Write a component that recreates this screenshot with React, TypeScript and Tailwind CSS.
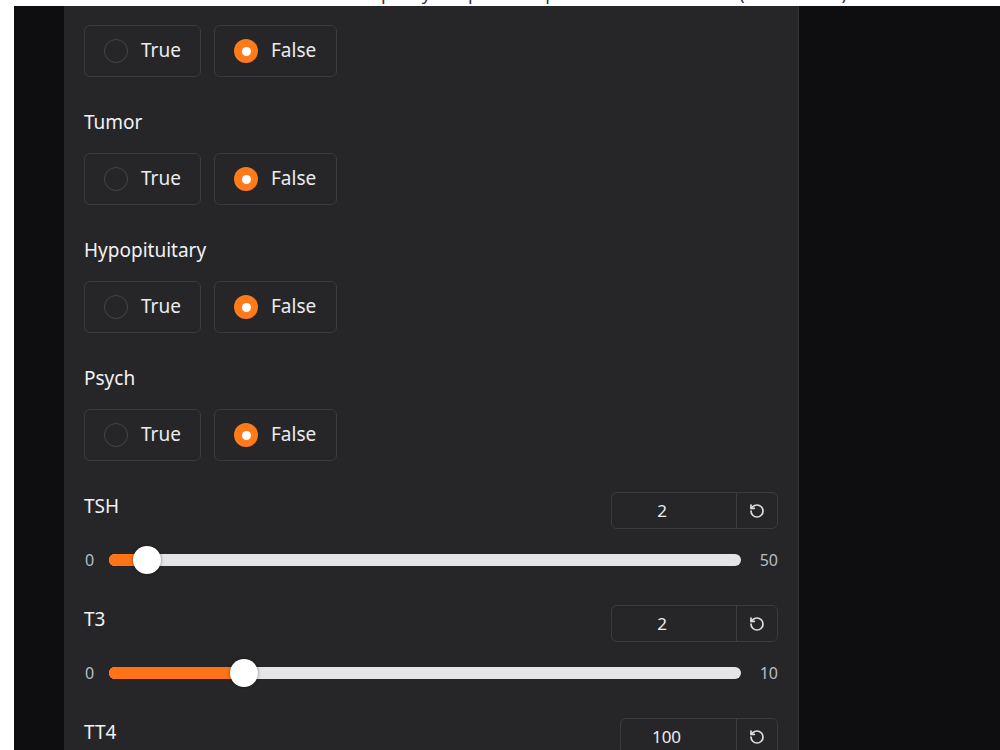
import React from 'react';
import { RotateCcw } from 'lucide-react';

const font = { fontFamily: '"Source Sans Pro", "Noto Sans", "Liberation Sans", sans-serif' };

// boolean choice rendered as two boxed radios
function BoolRadio({ label, value }: { label?: string; value: boolean }) {
  const Opt = ({ text, on, w }: { text: string; on: boolean; w: string }) => (
    <div className={`flex h-[52px] ${w} items-center gap-[13px] rounded-md border border-[#3b3b40] pl-[19px]`}>
      {on ? (
        <span className="flex h-[24px] w-[24px] items-center justify-center rounded-full bg-[#ff7a1a]">
          <span className="h-[9px] w-[9px] rounded-full bg-white" />
        </span>
      ) : (
        <span className="h-[24px] w-[24px] rounded-full border border-[#45454b]" />
      )}
      <span className="-mt-[1px] text-[19px] leading-none text-[#ececef]">{text}</span>
    </div>
  );
  return (
    <div className="flex flex-col">
      {label && <div className="mb-[19px] h-[24px] text-[19px] leading-[24px] text-[#f2f2f4]">{label}</div>}
      <div className="flex gap-[13px]">
        <Opt text="True" on={value} w="w-[117px]" />
        <Opt text="False" on={!value} w="w-[123px]" />
      </div>
    </div>
  );
}

function NumSlider({ label, value, min, max, inputW }: { label: string; value: number; min: number; max: number; inputW: string }) {
  const pct = (value - min) / (max - min);
  return (
    <div className="flex flex-col">
      <div className="flex items-start justify-between">
        <div className="mt-[2px] h-[24px] text-[19px] leading-[24px] text-[#f2f2f4]">{label}</div>
        <div className={`flex h-[37px] ${inputW} rounded-md border border-[#3b3b40]`}>
          <div className="flex flex-1 items-center justify-center pr-[24px] text-[17px] text-[#ececef]">{value}</div>
          <div className="flex w-[41px] items-center justify-center border-l border-[#3b3b40] text-[#dcdce0]">
            <RotateCcw size={16} strokeWidth={2.6} />
          </div>
        </div>
      </div>
      <div className="mt-[17px] flex h-[28px] items-center">
        <span className="w-[25px] pl-[1px] text-[16px] text-[#b9bcc6]">{min}</span>
        <div className="relative h-[12px] flex-1 rounded-full bg-[#e5e5e8]">
          <div
            className="absolute left-0 top-0 h-[12px] rounded-full bg-[#ff7316]"
            style={{ width: `calc(14px + (100% - 28px) * ${pct})` }}
          />
          <div
            className="absolute top-1/2 h-[28px] w-[28px] -translate-y-1/2 rounded-full bg-white shadow-[0_0_3px_rgba(0,0,0,0.5)]"
            style={{ left: `calc((100% - 28px) * ${pct})` }}
          />
        </div>
        <span className="w-[37px] text-right text-[16px] text-[#b9bcc6]">{max}</span>
      </div>
    </div>
  );
}

export default function App() {
  return (
    <div className="h-[750px] w-[1000px] overflow-hidden bg-white" style={font}>
      {/* caption cut off at the top edge */}
      <div className="h-[6px] overflow-hidden text-center">
        <div className="-mt-[17px] pl-[160px] text-[18px] leading-[20px] text-[#31333f]">
          Please specify the patient's parameters on the left (see sidebar)
        </div>
      </div>
      <div className="flex h-[744px]">
        <div className="w-[14px] bg-white" />
        <div className="w-[50px] bg-[#0e0e11]" />
        <div className="flex w-[735px] flex-col gap-[33px] border-r border-[#333338] bg-[#262629] pl-[20px] pr-[20px] pt-[19px]">
          <BoolRadio value={false} />
          <BoolRadio label="Tumor" value={false} />
          <BoolRadio label="Hypopituitary" value={false} />
          <BoolRadio label="Psych" value={false} />
          <div className="-mt-[2px] flex flex-col gap-[31px]">
            <NumSlider label="TSH" value={2} min={0} max={50} inputW="w-[167px]" />
            <NumSlider label="T3" value={2} min={0} max={10} inputW="w-[167px]" />
            <NumSlider label="TT4" value={100} min={0} max={300} inputW="w-[158px]" />
          </div>
        </div>
        <div className="flex-1 bg-[#0e0e11]" />
      </div>
    </div>
  );
}
